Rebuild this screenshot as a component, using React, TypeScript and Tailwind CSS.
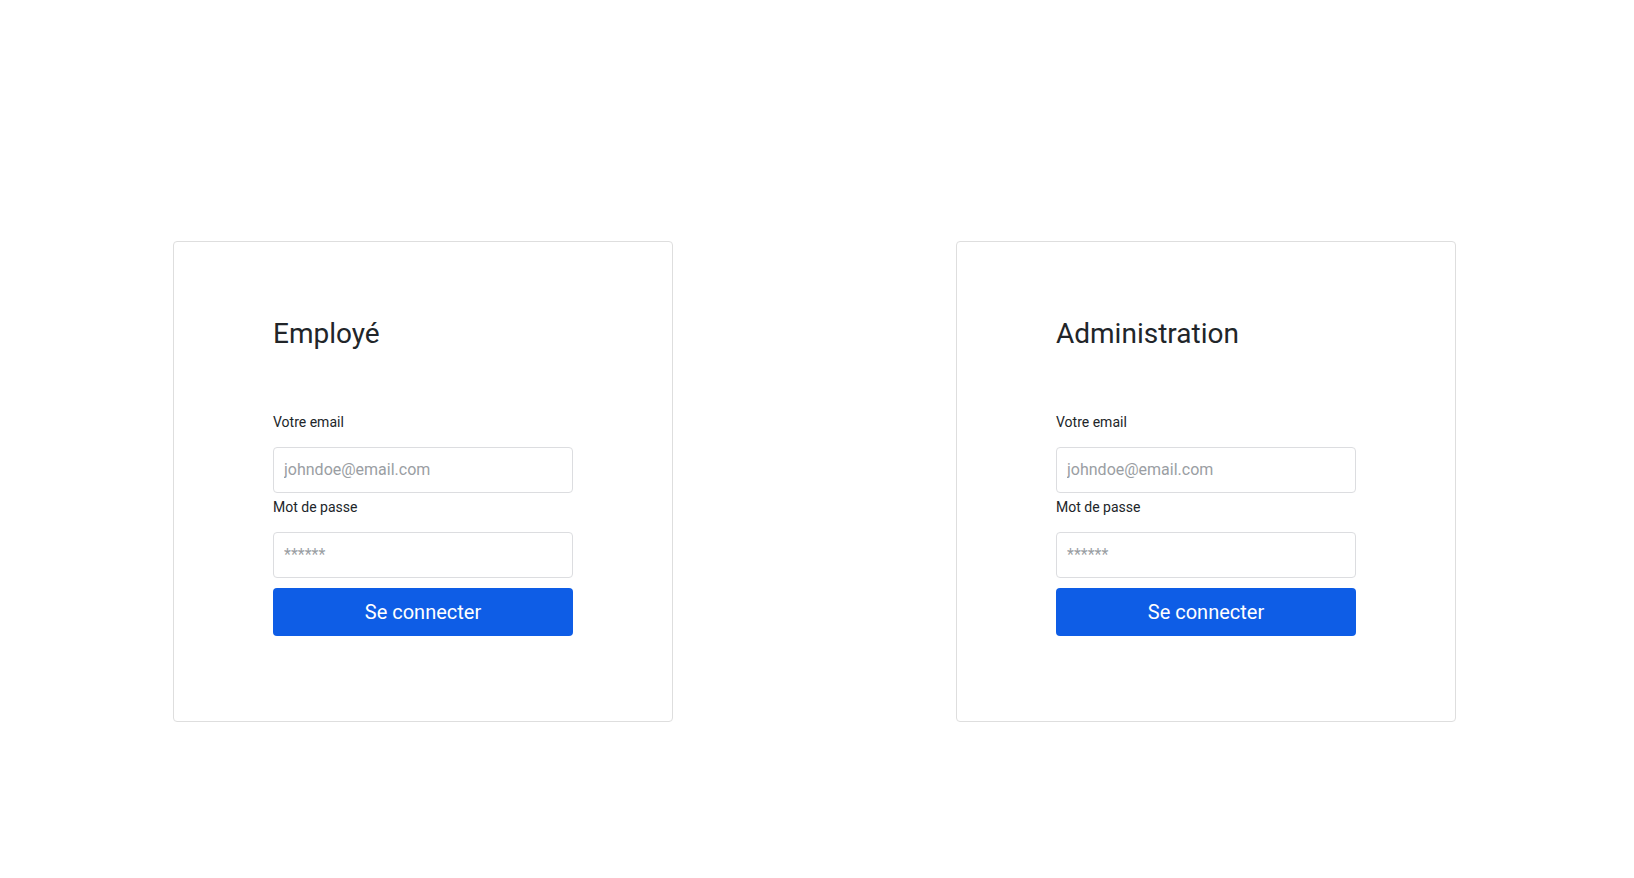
import React from "react";

function Card({ title }: { title: string }) {
  return (
    <div className="w-[500px] h-[481px] shrink-0 border border-[#dedede] rounded-[4px] bg-white px-[99px] pt-[75px]">
      <h2 className="text-[28px] leading-[34px] text-[#212529] font-normal">{title}</h2>
      <form className="flex flex-col" onSubmit={(e) => e.preventDefault()}>
        <label className="mt-[61px] text-[14px] leading-[21px] font-normal text-[#212529]">Votre email</label>
        <input
          type="email"
          placeholder="johndoe@email.com"
          className="mt-[14px] h-[46px] w-[300px] rounded-[4px] border border-[#dcdde0] px-[10px] pb-[2px] text-[16px] text-[#212529] placeholder:text-[#9a9ea3] outline-none"
        />
        <label className="mt-[4px] text-[14px] leading-[21px] font-normal text-[#212529]">Mot de passe</label>
        <input
          type="password"
          placeholder="******"
          className="mt-[14px] h-[46px] w-[300px] rounded-[4px] border border-[#dcdde0] px-[10px] pb-[2px] text-[16px] text-[#212529] placeholder:text-[#9a9ea3] outline-none"
        />
        <button
          type="submit"
          className="mt-[10px] h-[48px] w-[300px] rounded-[4px] bg-[#0e5de6] text-white text-[20px] leading-[24px]"
        >
          Se connecter
        </button>
      </form>
    </div>
  );
}

export default function App() {
  return (
    <div className="min-h-[878px] w-full bg-white font-['Roboto',sans-serif] flex gap-[283px] pl-[173px] pt-[241px]">
      <Card title="Employé" />
      <Card title="Administration" />
    </div>
  );
}
